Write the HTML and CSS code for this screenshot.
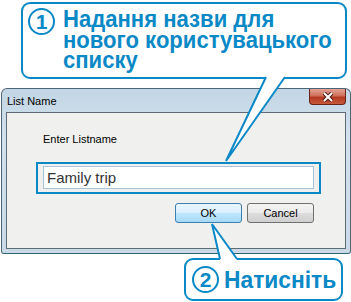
FILE: index.html
```html
<!DOCTYPE html>
<html lang="uk">
<head>
<meta charset="UTF-8">
<title>List Name</title>
<link rel="stylesheet" href="styles.css">
</head>
<body>
<div class="note note-top">
  <span class="step">1</span>
  <p class="note-text">Надання назви для<br>нового користувацького<br>списку</p>
</div>

<div class="window">
  <div class="titlebar">
    <span class="title">List Name</span>
    <span class="close">
      <svg width="14" height="10" viewBox="0 0 14 10"><path d="M3 1 L11 9 M11 1 L3 9" stroke="#4a1a12" stroke-width="4"/><path d="M3 1 L11 9 M11 1 L3 9" stroke="#fff" stroke-width="2"/></svg>
    </span>
  </div>
  <div class="client">
    <label class="field-label" for="listName">Enter Listname</label>
    <div class="highlight">
      <input type="text" id="listName" class="field" value="Family trip">
    </div>
    <div class="buttons">
      <button class="btn btn-default">OK</button>
      <button class="btn">Cancel</button>
    </div>
  </div>
</div>

<div class="note note-bottom">
  <span class="step">2</span>
  <p class="note-text">Натисніть</p>
</div>

<!-- callout pointers -->
<svg class="tails" width="351" height="302" viewBox="0 0 351 302">
  <polygon points="266,76 285,76 226,161" fill="#fff"/>
  <polyline points="266,77 226,161 285,77" fill="none" stroke="#0a89c6" stroke-width="2"/>
  <polygon points="220,260 237,260 212,224" fill="#fff"/>
  <polyline points="220,259 212,224 237,259" fill="none" stroke="#0a89c6" stroke-width="2"/>
</svg>
</body>
</html>
```

FILE: styles.css
```css
/* page */
body {
  margin: 0;
  width: 351px;
  height: 302px;
  position: relative;
  overflow: hidden;
  background: #fff;
  font-family: "Liberation Sans", Arial, sans-serif;
}

/* blue callouts */
.note {
  box-sizing: border-box;
  display: flex;
  align-items: flex-start;
  border: 2px solid #0a89c6;
  border-radius: 9px;
  background: #fff;
  color: #0a89c6;
}

.note-top {
  width: 326px;
  height: 77px;
  margin: 2px 0 0 21px;
  padding: 4px 0 0 5px;
}

.note-bottom {
  width: 159px;
  height: 43px;
  margin: 4px 0 0 184px;
  padding: 6px 0 0 6px;
}

.step {
  box-sizing: border-box;
  flex: none;
  width: 27px;
  height: 27px;
  border: 2px solid #0a89c6;
  border-radius: 50%;
  font-size: 21px;
  font-weight: bold;
  line-height: 23px;
  text-align: center;
}

/* condensed bold heading look */
.note-text {
  margin: 1px 0 0 8px;
  font-size: 24px;
  font-weight: bold;
  line-height: 20.5px;
  white-space: nowrap;
  transform: scaleX(0.92);
  transform-origin: left top;
}

.note-bottom .note-text {
  margin: 0 0 0 5px;
  line-height: 27px;
  transform: scaleX(0.95);
}

/* dialog window */
.window {
  box-sizing: border-box;
  width: 350px;
  height: 166px;
  margin: 9px 0 0 1px;
  border: 1px solid #4d6677;
  border-bottom-color: #2c6676;
  border-radius: 6px 6px 3px 3px;
  background: linear-gradient(to bottom, #c3d6e5, #d2e1ec 30%, #c9dae6);
}

.titlebar {
  display: flex;
  justify-content: space-between;
  align-items: flex-start;
  height: 23px;
  font-size: 11px;
  color: #000;
}

.title {
  margin: 6px 0 0 5px;
}

.close {
  box-sizing: border-box;
  display: flex;
  align-items: center;
  justify-content: center;
  width: 37px;
  height: 16px;
  margin-right: 4px;
  border: 1px solid #6a2418;
  border-top: none;
  border-radius: 0 0 4px 4px;
  background: linear-gradient(to bottom, #e3a393, #d0705c 45%, #b63a22 55%, #c6583c);
}

.client {
  box-sizing: border-box;
  height: 137px;
  margin: 0 4px;
  border: 1px solid #5e6a76;
  background: #f0f0ee;
  padding: 20px 0 0 29px;
}

.field-label {
  display: block;
  margin-left: 7px;
  font-size: 11px;
  line-height: 13px;
  color: #000;
}

.highlight {
  box-sizing: border-box;
  width: 285px;
  height: 32px;
  margin-top: 16px;
  border: 2px solid #0a89c6;
  padding: 2px 0 0 5px;
}

.field {
  box-sizing: border-box;
  display: block;
  width: 271px;
  height: 23px;
  margin: 0;
  padding: 0 0 0 3px;
  border: 1px solid #a7c4d8;
  background: #fff;
  font-family: "Liberation Sans", Arial, sans-serif;
  font-size: 15px;
  color: #333;
  outline: none;
}

.buttons {
  display: flex;
  gap: 5px;
  margin: 9px 0 0 139px;
}

.btn {
  box-sizing: border-box;
  width: 67px;
  height: 20px;
  padding: 0;
  border: 1px solid #707070;
  border-radius: 3px;
  background: linear-gradient(to bottom, #f3f3f3, #ebebeb 48%, #dcdcdc 52%, #cfcfcf);
  font-family: "Liberation Sans", Arial, sans-serif;
  font-size: 11px;
  color: #000;
}

.btn-default {
  border-color: #3c7fb1;
  background: linear-gradient(to bottom, #eaf6fd, #d9f0fc 48%, #bee6fd 52%, #a7d9f5);
}

/* pointers drawn over the dialog */
.tails {
  position: absolute;
  left: 0;
  top: 0;
  pointer-events: none;
}
```
